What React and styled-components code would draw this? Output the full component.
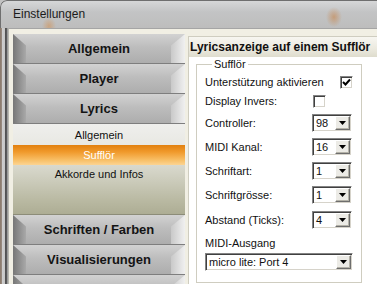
import React from 'react';
import styled, { createGlobalStyle } from 'styled-components';

const Global = createGlobalStyle`
  html, body { margin: 0; padding: 0; }
  body {
    width: 377px; height: 284px; overflow: hidden;
    background: #c2c2c2;
    font-family: "Liberation Sans", Arial, sans-serif;
  }
`;

const Window = styled.div`
  width: 377px;
  height: 284px;
  display: flex;
  flex-direction: column;
  overflow: hidden;
  border-top-left-radius: 7px;
  background: #c2c2c2;
`;

const TitleBar = styled.div`
  height: 28px;
  flex: none;
  display: flex;
  align-items: center;
  padding: 0 0 1px 12px;
  box-sizing: border-box;
  font-size: 12px;
  color: #1b1b1b;
  border-top: 1px solid #6f6f6f;
  border-left: 1px solid #6f6f6f;
  border-top-left-radius: 7px;
  background:
    radial-gradient(ellipse 7px 9px at 48px 25px, rgba(214,140,70,0.5), rgba(214,140,70,0) 100%),
    radial-gradient(ellipse 8px 10px at 333px 16px, rgba(200,120,50,0.5), rgba(200,120,50,0) 100%),
    linear-gradient(#d6d7d8, #c3c4c5 40%, #bdbdbd);
`;

const Body = styled.div`
  flex: 1;
  display: flex;
  min-height: 0;
`;

const LeftEdge = styled.div`
  width: 8px;
  flex: none;
  background: linear-gradient(to right,
    #8a7868 0, #9a8e84 2px, #cfcfcf 2px, #c6c6c6 5px, #4e4e4e 5px, #5e5e5e 7px, #9c9c9c 7px, #9c9c9c 8px);
`;

const Client = styled.div`
  flex: 1;
  display: flex;
  align-items: flex-start;
  gap: 3px;
  padding: 5px 0 0 4px;
  background: #f1efe4;
  border-top: 1px solid #a5a5a5;
  border-left: 1px solid #b8b8b0;
`;

const Nav = styled.div`
  width: 172px;
  flex: none;
  display: flex;
  flex-direction: column;
`;

const NavButton = styled.div`
  position: relative;
  height: 29px;
  border-bottom: 1px solid #7e7e7e;
  display: flex;
  align-items: center;
  justify-content: center;
  font-weight: bold;
  font-size: 13px;
  color: #141414;
  background: linear-gradient(#d2d2d2, #bdbdbd 45%, #adadad);
  overflow: hidden;

  &::before {
    content: "";
    position: absolute;
    left: 0; top: 0; bottom: 0;
    width: 13px;
    background: linear-gradient(to right, #777777, #a9a9a9);
    clip-path: polygon(0 0, 100% 40%, 100% 100%, 0 100%);
  }
  &::after {
    content: "";
    position: absolute;
    right: 0; top: 0; bottom: 0;
    width: 14px;
    background: linear-gradient(to left, #f0f0f0, #c9c9c9);
    clip-path: polygon(0 40%, 100% 0, 100% 100%, 0 100%);
  }
  & > span { position: relative; z-index: 1; }
`;

const SubPanel = styled.div`
  height: 90px;
  display: flex;
  flex-direction: column;
  border-bottom: 1px solid #8c8c78;
  background: linear-gradient(#efefed 0, #e8e8e2 25%, #d2d2c4 55%, #b9b9a2 85%, #adad94 100%);
`;

const SubItem = styled.div`
  height: ${p => p.$h}px;
  flex: none;
  display: flex;
  align-items: center;
  justify-content: center;
  font-size: 11px;
  color: ${p => (p.$active ? '#ffffff' : '#111')};
  background: ${p => (p.$active ? 'linear-gradient(#e2800e, #f09a2c 35%, #f8bf66 75%, #fcd492)' : 'transparent')};
`;

const Panel = styled.div`
  flex: 1;
  margin-top: 2px;
  height: 260px;
  background: #ffffff;
  border-left: 1px solid #cfcdc0;
  border-top: 1px solid #cfcdc0;
  display: flex;
  flex-direction: column;
`;

const PanelHeader = styled.div`
  height: 20px;
  flex: none;
  display: flex;
  align-items: center;
  padding-left: 1px;
  font-size: 12px;
  font-weight: bold;
  color: #111;
  white-space: nowrap;
  background: linear-gradient(#f7f6f1, #ebe9de 60%, #dedccd);
  border-bottom: 1px solid #ffffff;
`;

const Group = styled.fieldset`
  margin: 0 0 0 7px;
  width: 166px;
  box-sizing: border-box;
  height: 225px;
  padding: 2px 9px 0 8px;
  border: 1px solid #cfcdc0;
  display: flex;
  flex-direction: column;
  min-width: 0;
`;

const Legend = styled.legend`
  font-size: 11px;
  color: #111;
  padding: 0 2px;
  margin-left: 7px;
  line-height: 13px;
`;

const Row = styled.div`
  height: ${p => p.$h}px;
  flex: none;
  display: flex;
  align-items: center;
  font-size: 11px;
  color: #111;
  white-space: nowrap;
`;

const Label = styled.span`
  width: ${p => p.$w}px;
  flex: none;
`;

const Check = styled.span`
  width: 11px;
  height: 11px;
  flex: none;
  background: #ffffff;
  border: 1px solid;
  border-color: #848484 #ffffff #ffffff #848484;
  box-shadow: inset 1px 1px 0 #404040, inset -1px -1px 0 #d6d3ca;
  display: flex;
  align-items: center;
  justify-content: center;
`;

const Combo = styled.div`
  width: ${p => p.$w}px;
  height: 18px;
  box-sizing: border-box;
  flex: none;
  display: flex;
  align-items: center;
  background: #ffffff;
  border: 1px solid;
  border-color: #848484 #ffffff #ffffff #848484;
  box-shadow: inset 1px 1px 0 #404040, inset -1px -1px 0 #d6d3ca;
  padding: 1px 1px 1px 3px;
  font-size: 11px;
  color: #111;
`;

const ComboText = styled.span`
  flex: 1;
  white-space: nowrap;
`;

const DropBtn = styled.span`
  width: 15px;
  height: 14px;
  flex: none;
  box-sizing: border-box;
  background: #ecebe6;
  border: 1px solid;
  border-color: #ffffff #6e6e6e #6e6e6e #ffffff;
  box-shadow: inset -1px -1px 0 #b4b2a8;
  display: flex;
  align-items: center;
  justify-content: center;
`;

const Arrow = () => (
  <svg width="7" height="4" viewBox="0 0 7 4">
    <path d="M0 0H7L3.5 4Z" fill="#000" />
  </svg>
);

const Tick = () => (
  <svg width="9" height="9" viewBox="0 0 9 9">
    <path d="M1 4 L3.5 6.5 L8 1.5" stroke="#000" strokeWidth="2" fill="none" />
  </svg>
);

const Select = ({ w, value }) => (
  <Combo $w={w}>
    <ComboText>{value}</ComboText>
    <DropBtn><Arrow /></DropBtn>
  </Combo>
);

export default function App() {
  return (
    <>
      <Global />
      <Window>
        <TitleBar>Einstellungen</TitleBar>
        <Body>
          <LeftEdge />
          <Client>
            <Nav>
              <NavButton><span>Allgemein</span></NavButton>
              <NavButton><span>Player</span></NavButton>
              <NavButton><span>Lyrics</span></NavButton>
              <SubPanel>
                <SubItem $h={21}>Allgemein</SubItem>
                <SubItem $h={20} $active>Sufflör</SubItem>
                <SubItem $h={18}>Akkorde und Infos</SubItem>
              </SubPanel>
              <NavButton><span>Schriften / Farben</span></NavButton>
              <NavButton><span>Visualisierungen</span></NavButton>
              <NavButton><span>&nbsp;</span></NavButton>
            </Nav>
            <Panel>
              <PanelHeader>Lyricsanzeige auf einem Sufflör</PanelHeader>
              <Group>
                <Legend>Sufflör</Legend>
                <Row $h={18}>
                  <Label $w={135}>Unterstützung aktivieren</Label>
                  <Check><Tick /></Check>
                </Row>
                <Row $h={20}>
                  <Label $w={108}>Display Invers:</Label>
                  <Check />
                </Row>
                <Row $h={24}>
                  <Label $w={107}>Controller:</Label>
                  <Select w={40} value="98" />
                </Row>
                <Row $h={24}>
                  <Label $w={107}>MIDI Kanal:</Label>
                  <Select w={40} value="16" />
                </Row>
                <Row $h={24}>
                  <Label $w={107}>Schriftart:</Label>
                  <Select w={40} value="1" />
                </Row>
                <Row $h={24}>
                  <Label $w={107}>Schriftgrösse:</Label>
                  <Select w={40} value="1" />
                </Row>
                <Row $h={25}>
                  <Label $w={107}>Abstand (Ticks):</Label>
                  <Select w={40} value="4" />
                </Row>
                <Row $h={21}>
                  <Label $w={107}>MIDI-Ausgang</Label>
                </Row>
                <Row $h={18}>
                  <Select w={148} value="micro lite: Port 4" />
                </Row>
              </Group>
            </Panel>
          </Client>
        </Body>
      </Window>
    </>
  );
}
